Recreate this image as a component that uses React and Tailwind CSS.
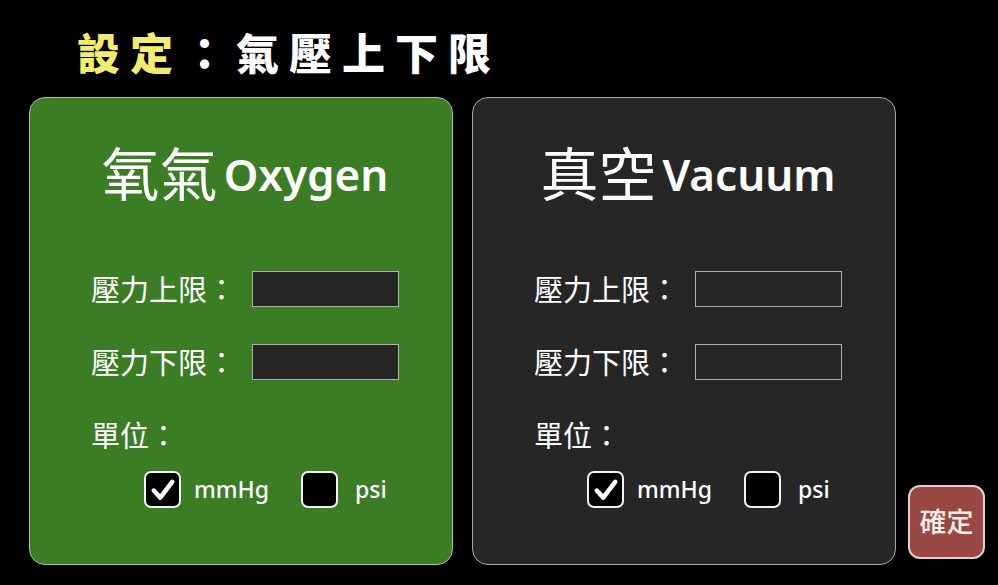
import React from "react";

const FONT = { fontFamily: '"Noto Sans", "Noto Sans CJK TC", sans-serif' };

function Check({ checked }) {
  return (
    <span className="flex h-[37px] w-[37px] items-center justify-center rounded-[7px] border-[2.5px] border-[#f2f2f2] bg-black">
      {checked && (
        <svg width="26" height="26" viewBox="0 0 24 24" fill="none">
          <path d="M3.5 12.5 L9.5 19 L20.5 4.5" stroke="#fff" strokeWidth="4.2" strokeLinecap="round" strokeLinejoin="round" />
        </svg>
      )}
    </span>
  );
}

function Panel({ zh, en, dark }) {
  const box = dark
    ? "bg-[#262626] border-[#a8a8a8]"
    : "bg-[#3a7d24] border-[#a9c39c]";
  return (
    <div className={`flex h-[468px] w-[424px] flex-col rounded-[16px] border ${box}`}>
      {/* Título */}
      <div className="mt-[44px] flex h-[64px] items-center justify-center pl-[8px] text-white">
        <span className="text-[58px] leading-none">{zh}</span>
        <span className="ml-[6px] text-[44px] font-semibold leading-none">{en}</span>
      </div>

      <div className="mt-[65px] flex flex-col pl-[61px] text-[29px] text-white">
        <div className="flex h-[36px] items-center">
          <span className="w-[161px] leading-none">壓力上限：</span>
          <span className="h-[36px] w-[147px] border border-[#b0b0b0] bg-[#262626]" />
        </div>
        <div className="mt-[37px] flex h-[36px] items-center">
          <span className="w-[161px] leading-none">壓力下限：</span>
          <span className="h-[36px] w-[147px] border border-[#b0b0b0] bg-[#262626]" />
        </div>
        <div className="mt-[37px] flex h-[36px] items-center">
          <span className="leading-none">單位：</span>
        </div>
        <div className="mt-[18px] ml-[53px] flex items-center text-[23px] font-medium">
          <Check checked />
          <span className="ml-[13px] w-[107px]">mmHg</span>
          <Check />
          <span className="ml-[17px]">psi</span>
        </div>
      </div>
    </div>
  );
}

export default function App() {
  return (
    <div className="h-[585px] w-[998px] overflow-hidden bg-black" style={FONT}>
      <h1 className="flex h-[97px] items-center pt-[12px] pl-[77px] text-[43px] font-black tracking-[10px]">
        <span className="text-[#f3ec6e]">設定</span>
        <span className="text-white">：</span>
        <span className="text-white">氣壓上下限</span>
      </h1>

      <div className="flex items-end pl-[29px]">
        <Panel zh="氧氣" en="Oxygen" />
        <div className="ml-[19px]">
          <Panel zh="真空" en="Vacuum" dark />
        </div>
        <button className="mb-[6px] ml-[12px] flex h-[74px] w-[77px] items-center justify-center rounded-[12px] border-2 border-[#e6cfc9] bg-[#9a4844] text-[27px] font-medium text-[#f4ecea]">
          確定
        </button>
      </div>
    </div>
  );
}
